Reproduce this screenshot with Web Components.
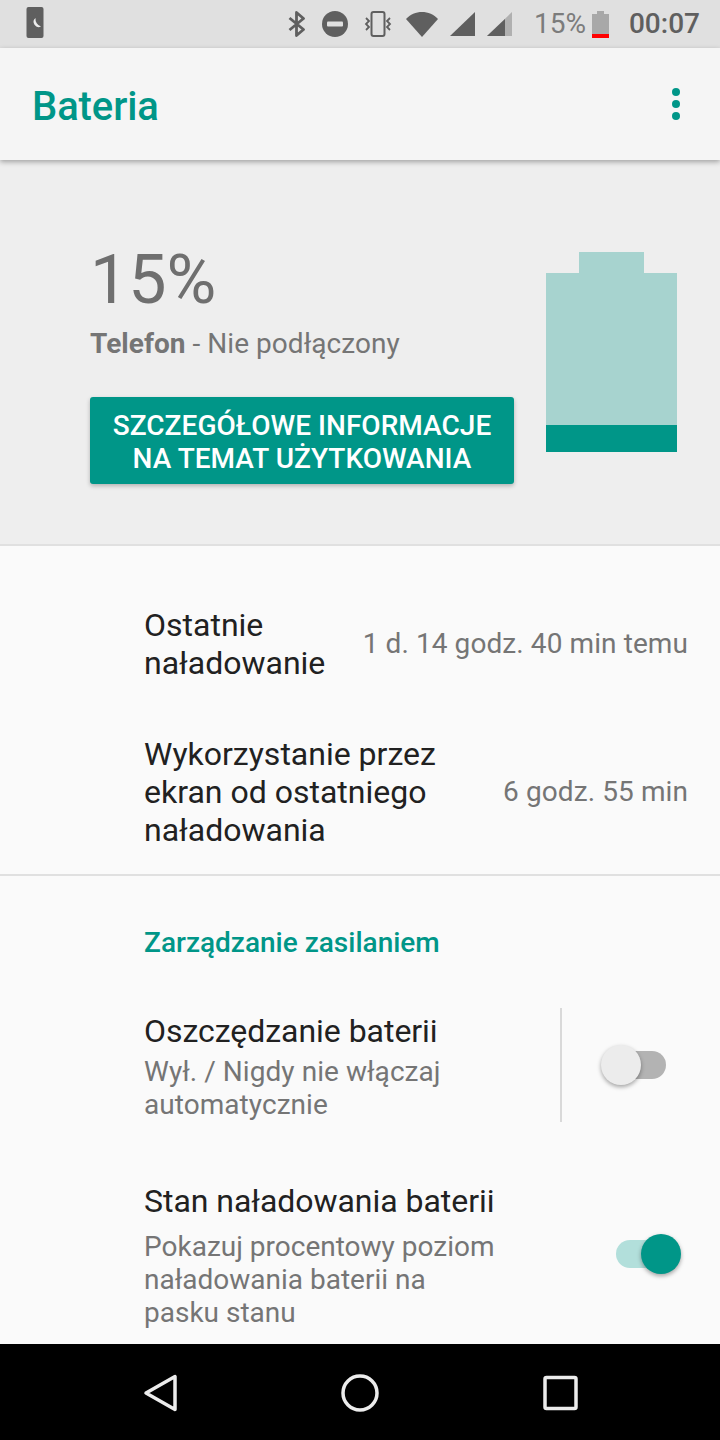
<!DOCTYPE html>
<html lang="pl"><head><meta charset="utf-8">
<style>
html,body{margin:0;padding:0;background:#fafafa}
body{width:720px;height:1440px;overflow:hidden;font-family:Roboto,sans-serif;display:flex;flex-direction:column}
</style></head><body>
<status-bar></status-bar>
<app-bar title="Bateria"></app-bar>
<battery-summary></battery-summary>
<main-list>
  <info-row title="Ostatnie naładowanie" value="1 d. 14 godz. 40 min temu" style="--title-w:200px;--top:60px;--bottom:53px"></info-row>
  <info-row title="Wykorzystanie przez ekran od ostatniego naładowania" value="6 godz. 55 min" style="--title-w:320px;--top:0px;--bottom:25px"></info-row>
  <list-divider></list-divider>
  <cat-title>Zarządzanie zasilaniem</cat-title>
  <switch-row title="Oszczędzanie baterii" summary="Wył. / Nigdy nie włączaj automatycznie" split></switch-row>
  <switch-row title="Stan naładowania baterii" summary="Pokazuj procentowy poziom naładowania baterii na pasku stanu" on></switch-row>
</main-list>
<nav-bar></nav-bar>
<script>
function def(name,css,html){
  customElements.define(name,class extends HTMLElement{
    connectedCallback(){
      if(this.shadowRoot)return;
      const r=this.attachShadow({mode:'open'});
      const h=typeof html==='function'?html(this):html;
      r.innerHTML=`<style>${css}</style>${h}`;
    }
  });
}
def('status-bar',`
:host{display:flex;align-items:center;height:48px;background:#e0e0e0;flex:none;color:#5f5f5f;padding:0 20px 0 26px;box-sizing:border-box}
svg{display:block;flex:none}
.sp{flex:1}
.pct{font-size:28px;color:#7c7c7c;margin-left:22px;line-height:48px}
.time{font-size:28px;font-weight:500;color:#5f5f5f;margin-left:20px;line-height:48px}
`,`
<svg width="18" height="32" viewBox="0 0 18 32" style="margin-top:-2px"><rect x="0.5" width="17" height="31" rx="2" fill="#5f5f5f"/><path d="M9.500 11A5.100 5.100 0 0 0 15 19.500 8 8 0 0 1 9.500 11z" fill="#ececec"/></svg>
<span class="sp"></span>
<svg width="18" height="26" viewBox="0 0 18 26"><path d="M1.500 7l14 11.500L8.500 24.500V1.500l7 6L1.500 19" fill="none" stroke="#5f5f5f" stroke-width="2.800" stroke-linejoin="round"/></svg>
<svg width="26" height="26" viewBox="0 0 26 26" style="margin-left:16px"><circle cx="13" cy="13" r="13" fill="#5f5f5f"/><rect x="5" y="10.500" width="16" height="5" rx="1" fill="#e0e0e0"/></svg>
<svg width="30" height="26" viewBox="0 0 30 26" style="margin-left:15px" fill="none" stroke="#5f5f5f"><rect x="8.500" y="1" width="13" height="24" rx="2" stroke-width="2"/><path d="M3 7l3 3-3 3 3 3-3 3M27 7l-3 3 3 3-3 3 3 3" stroke-width="1.800"/></svg>
<svg width="32" height="26" viewBox="0 0 32 26" style="margin-left:13px"><path d="M0 8C4 3.500 10 1 16 1s12 2.500 16 7L16 26z" fill="#5f5f5f"/></svg>
<svg width="25" height="26" viewBox="0 0 25 26" style="margin-left:12px"><path d="M0 25L25 1v24z" fill="#5f5f5f"/></svg>
<svg width="25" height="26" viewBox="0 0 25 26" style="margin-left:12px"><path d="M0 25L25 1v24z" fill="#b0b0b0"/><path d="M0 25L18 8v17z" fill="#5f5f5f"/></svg>
<span class="pct">15%</span>
<svg width="17" height="27" viewBox="0 0 17 27" style="margin-left:6px"><path d="M0 3h5V0h7v3h5v20H0z" fill="#a8a8a8"/><rect y="23" width="17" height="4" fill="#f00"/></svg>
<span class="time">00:07</span>
`);
def('app-bar',`
:host{display:flex;align-items:center;justify-content:space-between;height:112px;flex:none;background:#f5f5f5;box-shadow:0 2px 5px rgba(0,0,0,.32);position:relative;z-index:2;padding:0 40px 0 32px;box-sizing:border-box}
h1{margin:6px 0 0;font-size:40px;font-weight:500;color:#009688;line-height:60px;letter-spacing:-.1px}
.dots{display:flex;flex-direction:column;gap:4px}
i{display:block;width:8px;height:8px;border-radius:50%;background:#009688}
`,e=>`<h1>${e.getAttribute('title')}</h1><div class="dots"><i></i><i></i><i></i></div>`);
def('battery-summary',`
:host{display:flex;height:386px;flex:none;background:#eee;box-sizing:border-box;border-bottom:2px solid #e0e0e0;padding:92px 43px 0 90px;justify-content:space-between;align-items:flex-start}
.l{display:flex;flex-direction:column;width:424px}
.pct{font-size:68px;line-height:72px;color:#6f6f6f;font-weight:400;margin-top:-8px}
.st{font-size:28px;line-height:36px;color:#757575;margin-top:10px;letter-spacing:.04px}
.st b{font-weight:700}
.btn{margin-top:35px;background:#009688;color:#fff;font-size:28px;font-weight:500;line-height:33px;text-align:center;padding:12px 0 9px;border-radius:3px;box-shadow:0 2px 4px rgba(0,0,0,.25);letter-spacing:.03px}
svg{display:block}
`,`<div class="l"><div class="pct">15%</div><div class="st"><b>Telefon</b> - Nie podłączony</div><div class="btn">SZCZEGÓŁOWE INFORMACJE<br>NA TEMAT UŻYTKOWANIA</div></div>
<svg width="131" height="200" viewBox="0 0 131 200"><path d="M33 0h65v21h33v179H0V21h33z" fill="#a7d3cf"/><rect y="173" width="131" height="27" fill="#009688"/></svg>`);
def('main-list',`
:host{display:flex;flex-direction:column;flex:1;min-height:0;overflow:hidden;background:#fafafa}
`,`<slot></slot>`);
def('info-row',`
:host{display:flex;align-items:center;justify-content:space-between;padding:var(--top) 32px var(--bottom) 144px;font-size:32px;line-height:38px;color:#212121}
.t{width:var(--title-w)}
.v{font-size:28px;color:#757575;white-space:nowrap;letter-spacing:.09px}
`,e=>`<div class="t">${e.getAttribute('title')}</div><div class="v">${e.getAttribute('value')}</div>`);
def('list-divider',`:host{display:block;height:2px;background:#e0e0e0;flex:none}`,``);
def('cat-title',`:host{display:block;padding:51px 0 49px 144px;font-size:28px;font-weight:500;line-height:32px;color:#009688}`,`<slot></slot>`);
def('switch-row',`
:host{display:flex;align-items:flex-start;padding:0 0 0 144px;width:720px;box-sizing:border-box}
:host([on]){padding-top:56px}
.c{width:356px;flex:none;padding-top:4px}
.t{font-size:32px;line-height:38px;color:#212121;letter-spacing:-.04px}
.s{font-size:28px;line-height:33px;color:#757575;margin-top:5px;letter-spacing:.05px}
:host([on]) .s{margin-top:10px;letter-spacing:0}
`,e=>{
 const on=e.hasAttribute('on'),split=e.hasAttribute('split');
 return `<div class="c"><div class="t">${e.getAttribute('title')}</div><div class="s">${e.getAttribute('summary')}</div></div>${split?'<split-line></split-line>':''}<sw-itch ${on?'on':''}></sw-itch>`;
});
def('split-line',`:host{display:block;width:2px;height:114px;background:#d9d9d9;flex:none;margin:0 0 0 60px}`,``);
def('sw-itch',`
:host{display:block;position:relative;flex:none;width:80px;height:40px;margin:37px 0 0 39px}
:host([on]){margin:56px 0 0 106px}
.tr{position:absolute;left:10px;top:6px;width:55px;height:28px;border-radius:14px;background:#b3b3b3}
.th{position:absolute;left:0;top:0;width:40px;height:40px;border-radius:50%;background:#ececec;box-shadow:0 2px 4px rgba(0,0,0,.35)}
:host([on]) .tr{background:#b2dfdb}
:host([on]) .th{left:35px;background:#009688}
`,`<div class="tr"></div><div class="th"></div>`);
def('nav-bar',`
:host{display:flex;align-items:center;height:96px;flex:none;background:#000;position:relative}
svg{display:block;position:absolute;top:30px}
`,`
<svg style="left:143px" width="36" height="38" viewBox="0 0 36 38"><path d="M32 2.500v33L3 19z" fill="none" stroke="#ececec" stroke-width="3.500" stroke-linejoin="round"/></svg>
<svg style="left:340px" width="40" height="38" viewBox="0 0 40 38"><circle cx="20" cy="19" r="17" fill="none" stroke="#ececec" stroke-width="3.500"/></svg>
<svg style="left:543px" width="36" height="38" viewBox="0 0 36 38"><rect x="2" y="3.500" width="31" height="31" rx="1.500" fill="none" stroke="#ececec" stroke-width="3.500"/></svg>
`);
</script>
</body></html>
